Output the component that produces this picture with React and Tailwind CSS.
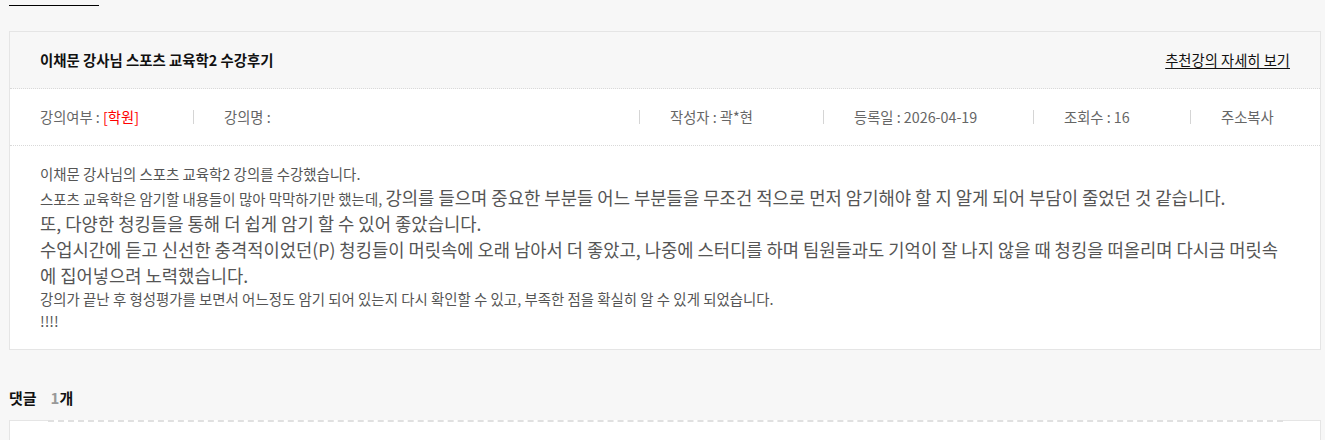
import React from 'react';

const font = { fontFamily: '"Noto Sans CJK KR", "Noto Sans", sans-serif' };

const Divider = () => <span className="w-px h-[14px] bg-[#d5d5d5] shrink-0" />;

const MetaItem = ({ className = '', children }) => (
  <div className={'flex items-center pl-[30px] text-[14.3px] text-[#666] ' + className}>{children}</div>
);

export default function App() {
  return (
    <div className="min-h-[440px] bg-[#f7f7f7] pt-[5px] pb-4" style={font}>
      <div className="ml-[9px] w-[90px] h-px bg-black" />

      <div className="ml-[9px] mt-[25px] w-[1312px] border border-[#e5e5e5]">
        <div className="h-[57px] flex items-center justify-between px-[30px] bg-[#f7f7f7] border-b border-dotted border-[#d9d9d9]">
          <div className="text-[14.4px] font-bold text-[#111]">이채문 강사님 스포츠 교육학2 수강후기</div>
          <a href="#" className="text-[14.3px] text-[#111] underline underline-offset-2">추천강의 자세히 보기</a>
        </div>

        <div className="h-[57px] flex items-center bg-white border-b border-dotted border-[#d9d9d9]">
          <MetaItem className="w-[183px]">
            강의여부 :&nbsp;<span className="text-[#f00]">[학원]</span>
          </MetaItem>
          <Divider />
          <MetaItem className="flex-1">강의명 :</MetaItem>
          <Divider />
          <MetaItem className="w-[183px]">작성자 : 곽*현</MetaItem>
          <Divider />
          <MetaItem className="w-[209px]">등록일 : 2026-04-19</MetaItem>
          <Divider />
          <MetaItem className="w-[156px]">조회수 : 16</MetaItem>
          <Divider />
          <MetaItem className="w-[129px]">주소복사</MetaItem>
        </div>

        <div className="bg-white px-[30px] py-[17px] text-[#555]">
          <p className="text-[14.45px] leading-[22px]">이채문 강사님의 스포츠 교육학2 강의를 수강했습니다.</p>
          <p className="text-[14.45px] leading-[25px]">
            스포츠 교육학은 암기할 내용들이 많아 막막하기만 했는데,{' '}
            <span className="text-[17.75px]">강의를 들으며 중요한 부분들 어느 부분들을 무조건 적으로 먼저 암기해야 할 지 알게 되어 부담이 줄었던 것 같습니다.</span>
          </p>
          <p className="text-[17.75px] leading-[25px]">또, 다양한 청킹들을 통해 더 쉽게 암기 할 수 있어 좋았습니다.</p>
          <p className="text-[17.7px] leading-[26px]">
            수업시간에 듣고 신선한 충격적이었던(P) 청킹들이 머릿속에 오래 남아서 더 좋았고, 나중에 스터디를 하며 팀원들과도 기억이 잘 나지 않을 때 청킹을 떠올리며 다시금 머릿속에 집어넣으려 노력했습니다.
          </p>
          <p className="text-[14.45px] leading-[22px]">강의가 끝난 후 형성평가를 보면서 어느정도 암기 되어 있는지 다시 확인할 수 있고, 부족한 점을 확실히 알 수 있게 되었습니다.</p>
          <p className="text-[14.45px] leading-[22px]">!!!!</p>
        </div>
      </div>

      <div className="ml-[9px] mt-[38px] h-[20px] flex items-center gap-[14px] text-[15px] font-bold text-[#111]">
        <span>댓글</span>
        <span><span className="text-[#999]">1</span>개</span>
      </div>

      <div className="ml-[9px] mt-[12px] w-[1312px] h-[40px] bg-white border-x border-b border-[#e5e5e5]">
        <div className="flex">
          <div className="w-[38px] border-t border-[#e5e5e5]" />
          <div className="flex-1 border-t-2 border-dashed border-[#e0e0e0]" />
          <div className="w-[37px] border-t border-[#e5e5e5]" />
        </div>
      </div>
    </div>
  );
}
